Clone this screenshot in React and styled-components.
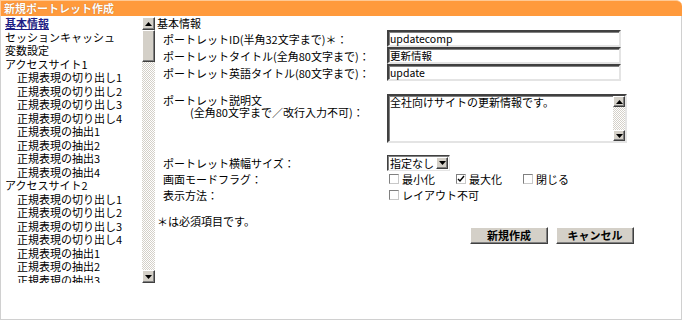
import React from 'react';
import styled, { createGlobalStyle } from 'styled-components';

const Global = createGlobalStyle`
  html, body { margin: 0; padding: 0; background: #fff; }
  body {
    font-family: "Noto Sans CJK JP", "Noto Sans", sans-serif;
    font-size: 11px;
    color: #000;
  }
  * { box-sizing: border-box; }
`;

const Wrapper = styled.div`
  width: 682px;
  display: flex;
  flex-direction: column;
`;

const Header = styled.div`
  height: 16px;
  background: #ff9a3c;
  border-top: 1px solid #ffc994;
  border-left: 1px solid #ffc994;
  border-top-right-radius: 6px;
  padding-left: 3px;
  color: #fff;
  font-weight: bold;
  font-size: 11px;
  line-height: 14px;
  text-shadow: 0 0 1px #b2601c;
`;

const Body = styled.div`
  height: 304px;
  display: flex;
  border: 1px solid #d0d0d0;
  border-top: none;
`;

const NavFrame = styled.div`
  width: 154px;
  height: 266px;
  margin-top: 1px;
  display: flex;
`;

const NavList = styled.div`
  flex: 1;
  overflow: hidden;
  font-size: 11px;
  line-height: 13.5px;
`;

const NavItem = styled.div`
  height: 13.5px;
  padding-left: ${p => (p.$sub ? 16 : 4)}px;
  white-space: nowrap;
  ${p => p.$active && `
    color: #1f1f85;
    font-weight: bold;
    text-decoration: underline;
  `}
`;

const ScrollBar = styled.div`
  width: ${p => p.$w || 13}px;
  display: flex;
  flex-direction: column;
  background: repeating-conic-gradient(#d4d0c8 0 25%, #fff 0 50%) 0 0 / 2px 2px;
`;

const ScrollBtn = styled.div`
  height: ${p => p.$h || 13}px;
  flex: none;
  background: #d4d0c8;
  border: 1px solid;
  border-color: #fff #404040 #404040 #fff;
  box-shadow: inset -1px -1px 0 #808080;
  display: flex;
  align-items: center;
  justify-content: center;
`;

const Thumb = styled.div`
  height: ${p => p.$h}px;
  flex: none;
  background: #d4d0c8;
  border: 1px solid;
  border-color: #fff #404040 #404040 #fff;
  box-shadow: inset -1px -1px 0 #808080;
`;

const Spacer = styled.div`
  flex: 1;
`;

const Arrow = ({ down }) => (
  <svg width="7" height="4" viewBox="0 0 7 4">
    {down ? <polygon points="0,0 7,0 3.5,4" fill="#000" /> : <polygon points="0,4 7,4 3.5,0" fill="#000" />}
  </svg>
);

const Main = styled.div`
  flex: 1;
  padding: 1px 0 0 2px;
  display: flex;
  flex-direction: column;
`;

const SectionTitle = styled.div`
  line-height: 13px;
  height: 13px;
`;

const Row = styled.div`
  display: grid;
  grid-template-columns: 230px auto;
  align-items: ${p => (p.$top ? 'start' : 'center')};
  min-height: ${p => p.$h || 17}px;
  margin-top: ${p => p.$mt || 0}px;
`;

const Label = styled.div`
  padding-left: 6px;
  white-space: nowrap;
  line-height: 12px;
`;

const SubLine = styled.div`
  padding-left: 27px;
`;

const TextInput = styled.div`
  width: 234px;
  height: 17px;
  border: 2px solid;
  border-color: #404040 #e4e4e4 #e4e4e4 #404040;
  box-shadow: inset 1px 1px 0 #808080;
  padding-left: 1px;
  font-size: 10.5px;
  line-height: 13px;
  white-space: nowrap;
`;

const TextArea = styled.div`
  width: 240px;
  height: 49px;
  border: 2px solid;
  border-color: #404040 #e4e4e4 #e4e4e4 #404040;
  box-shadow: inset 1px 1px 0 #808080;
  display: flex;
`;

const AreaText = styled.div`
  flex: 1;
  padding-left: 1px;
  line-height: 13px;
`;

const Select = styled.div`
  width: 63px;
  height: 16px;
  border: 1px solid;
  border-color: #404040 #e4e4e4 #e4e4e4 #404040;
  box-shadow: inset 1px 1px 0 #808080;
  display: flex;
  align-items: stretch;
`;

const SelectText = styled.div`
  flex: 1;
  padding-left: 2px;
  line-height: 14px;
`;

const SelectBtn = styled(ScrollBtn)`
  width: 12px;
  height: auto;
  margin: 1px 1px 1px 0;
`;

const Checks = styled.div`
  display: flex;
  padding-left: 2px;
`;

const CheckItem = styled.label`
  width: 67px;
  display: flex;
  align-items: center;
  gap: 3px;
  white-space: nowrap;
`;

const Box = styled.span`
  width: 10px;
  height: 10px;
  flex: none;
  border: 1px solid;
  border-color: #808080 #c8c8c8 #c8c8c8 #808080;
  background: #fff;
  display: flex;
  align-items: center;
  justify-content: center;
`;

const Check = ({ on, children }) => (
  <CheckItem>
    <Box>
      {on && (
        <svg width="8" height="8" viewBox="0 0 8 8">
          <polyline points="1,4 3,6 7,1" fill="none" stroke="#000" strokeWidth="1.4" />
        </svg>
      )}
    </Box>
    {children}
  </CheckItem>
);

const Note = styled.div`
  margin-top: 12px;
  line-height: 12px;
`;

const Buttons = styled.div`
  display: flex;
  gap: 8px;
  margin-left: 313px;
`;

const Button = styled.button`
  width: 78px;
  height: 17px;
  padding: 0;
  background: #d4d0c8;
  border: 1px solid;
  border-color: #fff #404040 #404040 #fff;
  box-shadow: inset -1px -1px 0 #808080;
  font-family: inherit;
  font-size: 11px;
  font-weight: bold;
  line-height: 13px;
  color: #000;
`;

const navItems = [
  { t: '基本情報', active: true },
  { t: 'セッションキャッシュ' },
  { t: '変数設定' },
  { t: 'アクセスサイト1' },
  { t: '正規表現の切り出し1', sub: true },
  { t: '正規表現の切り出し2', sub: true },
  { t: '正規表現の切り出し3', sub: true },
  { t: '正規表現の切り出し4', sub: true },
  { t: '正規表現の抽出1', sub: true },
  { t: '正規表現の抽出2', sub: true },
  { t: '正規表現の抽出3', sub: true },
  { t: '正規表現の抽出4', sub: true },
  { t: 'アクセスサイト2' },
  { t: '正規表現の切り出し1', sub: true },
  { t: '正規表現の切り出し2', sub: true },
  { t: '正規表現の切り出し3', sub: true },
  { t: '正規表現の切り出し4', sub: true },
  { t: '正規表現の抽出1', sub: true },
  { t: '正規表現の抽出2', sub: true },
  { t: '正規表現の抽出3', sub: true },
  { t: '正規表現の抽出4', sub: true },
];

export default function App() {
  return (
    <>
      <Global />
      <Wrapper>
        <Header>新規ポートレット作成</Header>
        <Body>
          <NavFrame>
            <NavList>
              {navItems.map((n, i) => (
                <NavItem key={i} $sub={n.sub} $active={n.active}>{n.t}</NavItem>
              ))}
            </NavList>
            <ScrollBar>
              <ScrollBtn><Arrow /></ScrollBtn>
              <Thumb $h={32} />
              <Spacer />
              <ScrollBtn><Arrow down /></ScrollBtn>
            </ScrollBar>
          </NavFrame>
          <Main>
            <SectionTitle>基本情報</SectionTitle>
            <Row>
              <Label>ポートレットID(半角32文字まで)＊：</Label>
              <TextInput>updatecomp</TextInput>
            </Row>
            <Row>
              <Label>ポートレットタイトル(全角80文字まで)：</Label>
              <TextInput>更新情報</TextInput>
            </Row>
            <Row>
              <Label>ポートレット英語タイトル(80文字まで)：</Label>
              <TextInput>update</TextInput>
            </Row>
            <Row $top $mt={13}>
              <Label>
                ポートレット説明文
                <SubLine>(全角80文字まで／改行入力不可)：</SubLine>
              </Label>
              <TextArea>
                <AreaText>全社向けサイトの更新情報です。</AreaText>
                <ScrollBar $w={12}>
                  <ScrollBtn $h={11}><Arrow /></ScrollBtn>
                  <Spacer />
                  <ScrollBtn $h={11}><Arrow down /></ScrollBtn>
                </ScrollBar>
              </TextArea>
            </Row>
            <Row $mt={12} $h={16}>
              <Label>ポートレット横幅サイズ：</Label>
              <Select>
                <SelectText>指定なし</SelectText>
                <SelectBtn><Arrow down /></SelectBtn>
              </Select>
            </Row>
            <Row $h={16}>
              <Label>画面モードフラグ：</Label>
              <Checks>
                <Check>最小化</Check>
                <Check on>最大化</Check>
                <Check>閉じる</Check>
              </Checks>
            </Row>
            <Row $h={16}>
              <Label>表示方法：</Label>
              <Checks>
                <Check>レイアウト不可</Check>
              </Checks>
            </Row>
            <Note>＊は必須項目です。</Note>
            <Buttons>
              <Button>新規作成</Button>
              <Button>キャンセル</Button>
            </Buttons>
          </Main>
        </Body>
      </Wrapper>
    </>
  );
}
